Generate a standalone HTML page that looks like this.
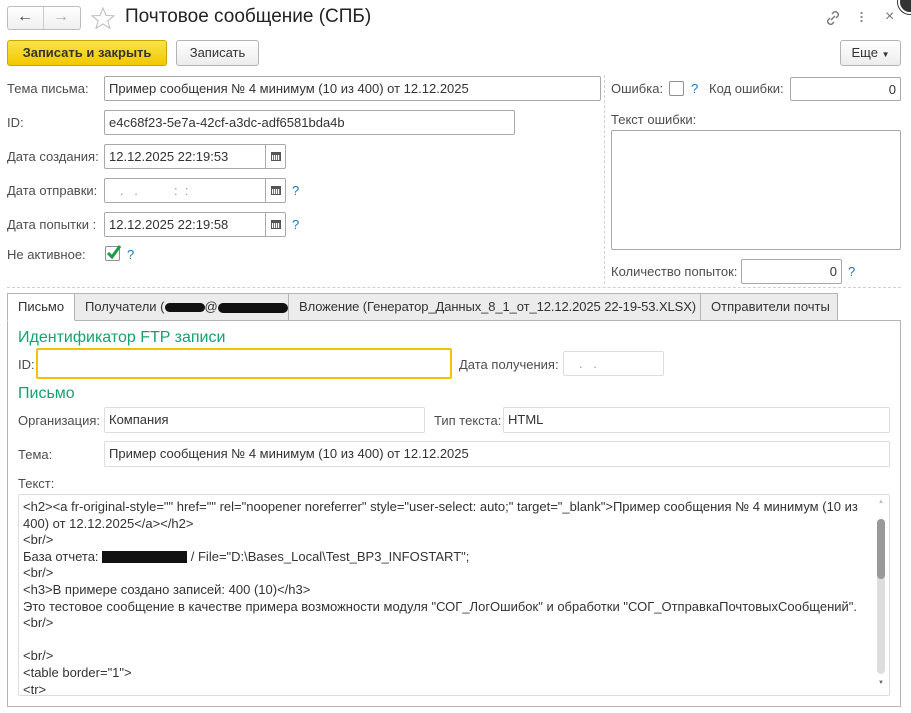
<!DOCTYPE html>
<html><head><meta charset="utf-8"><style>
*{box-sizing:border-box}
body{margin:0;width:911px;height:713px;background:#fff;font-family:"Liberation Sans",Arial,sans-serif;font-size:13px;color:#4d4d4d;position:relative;overflow:hidden}
.a{position:absolute;white-space:nowrap}
.in{position:absolute;border:1px solid #a9a9a9;border-radius:2px;background:#fff;color:#333;padding:0 4px;line-height:23px;white-space:nowrap;overflow:hidden}
.cal{position:absolute;right:0;top:0;bottom:0;width:20px;border-left:1px solid #a9a9a9;display:flex;align-items:center;justify-content:center}
.cal i{display:block;width:10px;height:9px;border:1px solid #555;border-top:3px solid #555;background:repeating-linear-gradient(90deg,#fff 0 1px,#777 1px 2px)}
.q{position:absolute;color:#1a75c0;font-size:13px}
.btn{position:absolute;border:1px solid #b3b3b3;border-radius:3px;background:linear-gradient(#fff,#ececec);text-align:center;line-height:24px;color:#333;white-space:nowrap}
.tab{position:absolute;top:293px;height:28px;border:1px solid #b5b5b5;background:#ececec;line-height:26px;padding:0 0 0 10px;color:#333;white-space:nowrap;overflow:hidden}
.g{position:absolute;color:#14a36e;font-size:16px;white-space:nowrap}
.cb{position:absolute;width:15px;height:15px;border:1px solid #8f8f8f;border-radius:2px;background:#fff}
</style></head><body>
<div class="a" style="left:7px;top:6px;width:74px;height:24px;border:1px solid #bdbdbd;border-radius:3px;background:linear-gradient(#fff,#efefef)"></div>
<div class="a" style="left:43px;top:7px;width:1px;height:22px;background:#ccc"></div>
<div class="a" style="left:17px;top:8px;font-size:16px;color:#444;font-weight:bold">&#8592;</div>
<div class="a" style="left:53px;top:8px;font-size:16px;color:#aaa;font-weight:bold">&#8594;</div>
<svg class="a" style="left:91px;top:7px" width="24" height="22" viewBox="0 0 24 22"><polygon points="12,1 15,8.5 23,8.8 16.8,13.8 19,21.3 12,17 5,21.3 7.2,13.8 1,8.8 9,8.5" fill="none" stroke="#bbb" stroke-width="1"/></svg>
<div class="a" style="left:125px;top:6px;font-size:19px;color:#222">Почтовое сообщение (СПБ)</div>
<svg class="a" style="left:824px;top:9px" width="18" height="18" viewBox="0 0 18 18"><g fill="none" stroke="#777" stroke-width="1.4"><path d="M7 11l4-4"/><path d="M8 5l2-2a3 3 0 0 1 4 4l-2 2"/><path d="M10 13l-2 2a3 3 0 0 1-4-4l2-2"/></g></svg>
<div class="a" style="left:860px;top:11px;width:3px;height:13px;background:radial-gradient(circle,#888 1px,transparent 1.3px) 0 0/3px 4px"></div>
<div class="a" style="left:885px;top:8px;font-size:16px;color:#777">×</div>
<div class="a" style="left:898px;top:-10px;width:24px;height:24px;border-radius:50%;background:#333;border:2px solid #fff;box-shadow:0 0 0 1px #333"></div>
<div class="btn" style="left:7px;top:40px;width:160px;height:26px;background:linear-gradient(#fbe34a,#f1c800);border-color:#c9a900;font-weight:bold;color:#333">Записать и закрыть</div>
<div class="btn" style="left:176px;top:40px;width:83px;height:26px">Записать</div>
<div class="btn" style="left:840px;top:40px;width:61px;height:26px">Еще <span style="font-size:8px">▼</span></div>
<div class="a" style="left:7px;top:81px">Тема письма:</div>
<div class="in" style="left:104px;top:76px;width:497px;height:25px">Пример сообщения № 4 минимум (10 из 400) от 12.12.2025</div>
<div class="a" style="left:7px;top:115px">ID:</div>
<div class="in" style="left:104px;top:110px;width:411px;height:25px">e4c68f23-5e7a-42cf-a3dc-adf6581bda4b</div>
<div class="a" style="left:7px;top:149px">Дата создания:</div>
<div class="in" style="left:104px;top:144px;width:182px;height:25px">12.12.2025 22:19:53<div class="cal"><i></i></div></div>
<div class="a" style="left:7px;top:183px">Дата отправки:</div>
<div class="in" style="left:104px;top:178px;width:182px;height:25px;color:#999">&nbsp;&nbsp;&nbsp;.&nbsp;&nbsp;&nbsp;.&nbsp;&nbsp;&nbsp;&nbsp;&nbsp;&nbsp;&nbsp;&nbsp;&nbsp;&nbsp;:&nbsp;&nbsp;:<div class="cal"><i></i></div></div>
<div class="q" style="left:292px;top:183px">?</div>
<div class="a" style="left:7px;top:217px">Дата попытки :</div>
<div class="in" style="left:104px;top:212px;width:182px;height:25px">12.12.2025 22:19:58<div class="cal"><i></i></div></div>
<div class="q" style="left:292px;top:217px">?</div>
<div class="a" style="left:7px;top:247px">Не активное:</div>
<div class="cb" style="left:105px;top:246px"></div>
<svg class="a" style="left:105px;top:243px" width="18" height="18"><path d="M3 10l4 4 8-11" fill="none" stroke="#1c9b46" stroke-width="3"/></svg>
<div class="q" style="left:127px;top:247px">?</div>
<div class="a" style="left:604px;top:75px;height:209px;border-left:1px dashed #d0d0d0"></div>
<div class="a" style="left:611px;top:81px">Ошибка:</div>
<div class="cb" style="left:669px;top:81px"></div>
<div class="q" style="left:691px;top:81px">?</div>
<div class="a" style="left:709px;top:81px">Код ошибки:</div>
<div class="in" style="left:790px;top:77px;width:111px;height:24px;text-align:right">0</div>
<div class="a" style="left:611px;top:112px">Текст ошибки:</div>
<div class="in" style="left:611px;top:130px;width:290px;height:120px"></div>
<div class="a" style="left:611px;top:264px">Количество попыток:</div>
<div class="in" style="left:741px;top:259px;width:101px;height:25px;text-align:right">0</div>
<div class="q" style="left:848px;top:264px">?</div>
<div class="a" style="left:7px;top:287px;width:894px;border-top:1px dashed #d0d0d0"></div>
<div class="a" style="left:7px;top:320px;width:894px;height:387px;border:1px solid #b5b5b5"></div>
<div class="tab" style="left:74px;width:215px">Получатели (<span style="display:inline-block;width:40px;height:9px;background:#111;border-radius:5px;vertical-align:middle"></span>@<span style="display:inline-block;width:70px;height:10px;background:#111;border-radius:5px;vertical-align:middle"></span></div>
<div class="tab" style="left:288px;width:413px;letter-spacing:-0.1px">Вложение (Генератор_Данных_8_1_от_12.12.2025 22-19-53.XLSX)</div>
<div class="tab" style="left:700px;width:138px">Отправители почты</div>
<div class="tab" style="left:7px;width:68px;background:#fff;border-bottom-color:#fff;height:28px;z-index:2">Письмо</div>
<div class="g" style="left:18px;top:329px">Идентификатор FTP записи</div>
<div class="a" style="left:18px;top:357px">ID:</div>
<div class="in" style="left:36px;top:348px;width:416px;height:31px;border:2px solid #f2c200"></div>
<div class="a" style="left:459px;top:357px">Дата получения:</div>
<div class="in" style="left:563px;top:351px;width:101px;height:25px;border-color:#ddd;color:#999">&nbsp;&nbsp;&nbsp;.&nbsp;&nbsp;&nbsp;.</div>
<div class="g" style="left:18px;top:385px">Письмо</div>
<div class="a" style="left:18px;top:413px">Организация:</div>
<div class="in" style="left:104px;top:407px;width:321px;height:26px;border-color:#ddd">Компания</div>
<div class="a" style="left:434px;top:413px">Тип текста:</div>
<div class="in" style="left:503px;top:407px;width:387px;height:26px;border-color:#ddd">HTML</div>
<div class="a" style="left:18px;top:447px">Тема:</div>
<div class="in" style="left:104px;top:441px;width:786px;height:26px;border-color:#ddd">Пример сообщения № 4 минимум (10 из 400) от 12.12.2025</div>
<div class="a" style="left:18px;top:476px">Текст:</div>
<div class="a" style="left:18px;top:494px;width:872px;height:202px;border:1px solid #ddd;border-radius:2px"></div>
<div class="a" style="left:23px;top:499px;line-height:16.6px;color:#333;font-size:13px">&lt;h2&gt;&lt;a fr-original-style="" href="" rel="noopener noreferrer" style="user-select: auto;" target="_blank"&gt;Пример сообщения № 4 минимум (10 из<br>400) от 12.12.2025&lt;/a&gt;&lt;/h2&gt;<br>&lt;br/&gt;<br>База отчета: <span style="display:inline-block;width:85px;height:12px;background:#111;vertical-align:middle"></span> / File="D:\Bases_Local\Test_BP3_INFOSTART";<br>&lt;br/&gt;<br>&lt;h3&gt;В примере создано записей: 400 (10)&lt;/h3&gt;<br>Это тестовое сообщение в качестве примера возможности модуля "СОГ_ЛогОшибок" и обработки "СОГ_ОтправкаПочтовыхСообщений".<br>&lt;br/&gt;<br>&nbsp;<br>&lt;br/&gt;<br>&lt;table border="1"&gt;<br>&lt;tr&gt;</div>
<div class="a" style="left:877px;top:519px;width:8px;height:155px;background:#ddd;border-radius:4px"></div>
<div class="a" style="left:877px;top:519px;width:8px;height:60px;background:#999;border-radius:4px"></div>
<div class="a" style="left:878px;top:499px;font-size:6px;color:#bbb">▲</div>
<div class="a" style="left:878px;top:680px;font-size:6px;color:#666">▼</div>
</body></html>
